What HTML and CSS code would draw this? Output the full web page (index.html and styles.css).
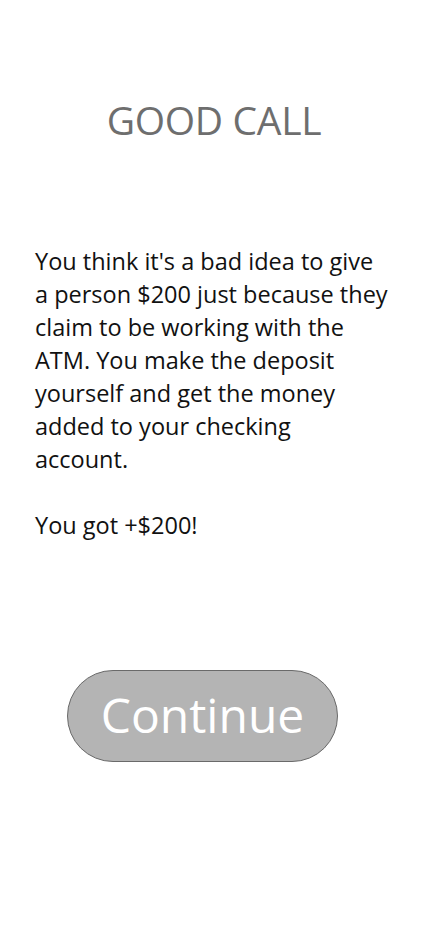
FILE: index.html
```html
<!DOCTYPE html>
<html lang="en">
<head>
<meta charset="utf-8">
<title>Good Call</title>
<link rel="stylesheet" href="styles.css">
</head>
<body>
<main class="screen">
  <h1 class="title">GOOD CALL</h1>
  <div class="story">
    <p>You think it's a bad idea to give<br>a person $200 just because they<br>claim to be working with the<br>ATM. You make the deposit<br>yourself and get the money<br>added to your checking<br>account.</p>
    <p>You got +$200!</p>
  </div>
  <div class="actions">
    <button class="continue" type="button">Continue</button>
  </div>
</main>
</body>
</html>
```

FILE: styles.css
```css
html, body {
  margin: 0;
  padding: 0;
  background: #ffffff;
}
.screen {
  width: 428px;
  height: 926px;
  display: flex;
  flex-direction: column;
  font-family: "Open Sans", "Noto Sans", sans-serif;
}
.title {
  margin: 96px 0 0;
  text-align: center;
  font-weight: 400;
  font-size: 39px;
  line-height: 48px;
  color: #6e6e6e;
  letter-spacing: -0.3px;
}
.story {
  margin: 101px 20px 0 35px;
  font-size: 23.5px;
  line-height: 33px;
  color: #111111;
}
.story p {
  margin: 0 0 33px;
}
.actions {
  margin-top: 95px;
  padding-left: 67px;
}
.continue {
  width: 271px;
  height: 92px;
  border-radius: 46px;
  border: 1px solid #6a6a6a;
  background: #b4b4b4;
  color: #ffffff;
  font-family: "Open Sans", "Noto Sans", sans-serif;
  font-size: 48px;
  padding: 0 0 4px;
}
```
